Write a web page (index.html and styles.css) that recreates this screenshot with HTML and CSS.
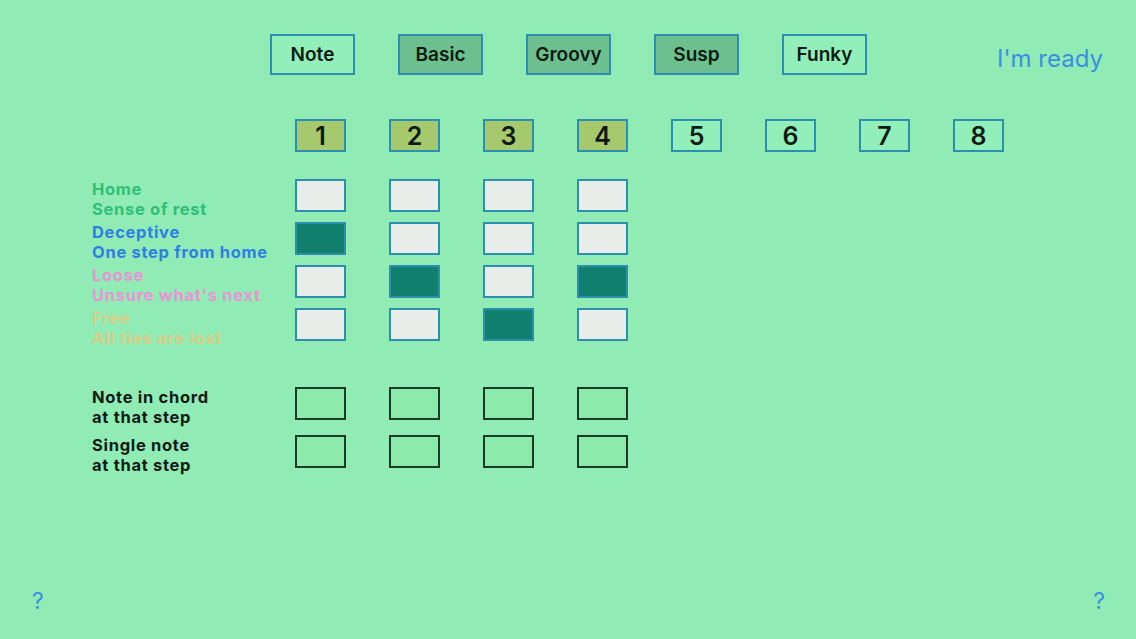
FILE: index.html
```html
<!DOCTYPE html>
<html>
<head>
<meta charset="utf-8">
<link rel="stylesheet" href="styles.css">
</head>
<body>
<div class="page">
  <header class="topbar">
    <div class="modes">
      <div class="mode">Note</div>
      <div class="mode dark">Basic</div>
      <div class="mode dark">Groovy</div>
      <div class="mode dark">Susp</div>
      <div class="mode">Funky</div>
    </div>
    <div class="ready">I'm ready</div>
  </header>

  <div class="steps">
    <div class="step on">1</div>
    <div class="step on">2</div>
    <div class="step on">3</div>
    <div class="step on">4</div>
    <div class="step">5</div>
    <div class="step">6</div>
    <div class="step">7</div>
    <div class="step">8</div>
  </div>

  <div class="grid">
    <div class="row">
      <div class="label home">Home<br>Sense of rest</div>
      <div class="cell"></div><div class="cell"></div><div class="cell"></div><div class="cell"></div>
    </div>
    <div class="row">
      <div class="label deceptive">Deceptive<br>One step from home</div>
      <div class="cell fill"></div><div class="cell"></div><div class="cell"></div><div class="cell"></div>
    </div>
    <div class="row">
      <div class="label loose">Loose<br>Unsure what's next</div>
      <div class="cell"></div><div class="cell fill"></div><div class="cell"></div><div class="cell fill"></div>
    </div>
    <div class="row">
      <div class="label free">Free<br>All ties are lost</div>
      <div class="cell"></div><div class="cell"></div><div class="cell fill"></div><div class="cell"></div>
    </div>
  </div>

  <div class="notes">
    <div class="row nrow">
      <div class="label black">Note in chord<br>at that step</div>
      <div class="ncell"></div><div class="ncell"></div><div class="ncell"></div><div class="ncell"></div>
    </div>
    <div class="row nrow">
      <div class="label black">Single note<br>at that step</div>
      <div class="ncell"></div><div class="ncell"></div><div class="ncell"></div><div class="ncell"></div>
    </div>
  </div>

  <footer class="footer">
    <span class="help">?</span>
    <span class="help">?</span>
  </footer>
</div>
</body>
</html>
```

FILE: styles.css
```css
html, body {
  margin: 0;
  padding: 0;
}
body {
  background: #90ebb5;
  font-family: Inter, "Liberation Sans", Arial, sans-serif;
  color: #111;
}
.page {
  height: 639px;
  display: flex;
  flex-direction: column;
  box-sizing: border-box;
}
.topbar {
  display: flex;
  align-items: flex-start;
  padding: 34px 33px 0 270px;
}
.modes {
  display: flex;
  gap: 43px;
}
.mode {
  width: 85px;
  height: 41px;
  box-sizing: border-box;
  border: 2px solid #2c8fb0;
  background: #93efb9;
  display: flex;
  align-items: center;
  justify-content: center;
  font-weight: 600;
  font-size: 19px;
  color: #0c1a12;
}
.mode.dark {
  background: #6dbf8f;
}
.ready {
  margin-left: auto;
  margin-top: 10px;
  font-size: 24px;
  color: #3a8fe0;
}
.steps {
  display: flex;
  gap: 43px;
  padding-left: 295px;
  margin-top: 44px;
}
.step {
  width: 51px;
  height: 33px;
  box-sizing: border-box;
  border: 2px solid #2c8fb0;
  background: #93efb9;
  display: flex;
  align-items: center;
  justify-content: center;
  font-weight: 600;
  font-size: 25px;
  color: #0c1a12;
}
.step.on {
  background: #a6c96e;
}
.grid {
  margin-top: 27px;
  display: flex;
  flex-direction: column;
  gap: 10px;
  padding-left: 92px;
}
.row {
  display: flex;
  gap: 43px;
  height: 33px;
}
.label {
  width: 160px;
  font-weight: bold;
  font-size: 16.5px;
  letter-spacing: 0.7px;
  line-height: 19.5px;
  margin-top: 1px;
  white-space: nowrap;
}
.home { color: #2fbf78; }
.deceptive { color: #2f7fe3; }
.loose { color: #ea94d6; }
.free { color: #d9cd88; }
.black { color: #101a14; }
.cell {
  width: 51px;
  height: 33px;
  box-sizing: border-box;
  border: 2px solid #2c8fb0;
  background: #e8ede9;
}
.cell.fill {
  background: #11806e;
}
.notes {
  margin-top: 46px;
  display: flex;
  flex-direction: column;
  gap: 15px;
  padding-left: 92px;
}
.ncell {
  width: 51px;
  height: 33px;
  box-sizing: border-box;
  border: 2px solid #1a3a28;
  background: #8cebab;
}
.footer {
  margin-top: auto;
  display: flex;
  justify-content: space-between;
  padding: 0 31px 24px 32px;
}
.help {
  font-size: 23px;
  color: #3a8fe0;
}
```
